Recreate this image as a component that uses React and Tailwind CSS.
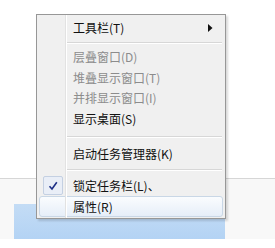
function Sep({ h = "h-[9px]" }) {
  return (
    <div className={`flex ${h} items-center pl-[29px] pr-[3px]`}>
      <div className="w-full border-t border-b border-t-[#d7d7d7] border-b-white" />
    </div>
  );
}

function Item({ label, disabled, arrow, checked, hover, h = "h-[21px]" }) {
  return (
    <div
      className={`relative mx-[2px] flex items-center border ${h} ${
        hover
          ? "rounded-[3px] border-[#c9d7e6] bg-gradient-to-b from-[#fafcfe] to-[#e6eef8]"
          : "border-transparent"
      }`}
    >
      <div className="flex w-[26px] shrink-0 items-center justify-center self-stretch">
        {checked && (
          <div className="flex h-[19px] w-[20px] items-center justify-center rounded-[2px] border border-[#c4d0e2] bg-[#e9eef7]">
            <svg width="10" height="10" viewBox="0 0 10 10">
              <path d="M1.5 5.2 L4 8 L8.8 1.2" fill="none" stroke="#1d2f86" strokeWidth="1.6" />
            </svg>
          </div>
        )}
      </div>
      <span className={`ml-[7px] text-[12px] leading-none ${disabled ? "text-[#8c8c8c]" : "text-[#111]"}`}>
        {label}
      </span>
      {arrow && (
        <svg className="absolute right-[9px]" width="5" height="8" viewBox="0 0 5 8">
          <path d="M0 0 L4.5 4 L0 8 Z" fill="#111" />
        </svg>
      )}
    </div>
  );
}

export default function App() {
  return (
    <div
      className="relative flex h-[248px] w-[275px] flex-col overflow-hidden bg-white"
      style={{ fontFamily: '"Microsoft YaHei", "Noto Sans CJK SC", sans-serif' }}
    >
      {/* desktop backdrop behind the menu */}
      <div className="h-[178px]" />
      <div className="flex h-[61px] flex-col border-t border-[#d6d6d6] bg-[#f8f8f8]">
        <div className="h-[25px]" />
        <div className="flex flex-1 pl-[14px]">
          <div className="w-[211px] bg-gradient-to-b from-[#c4dcf5] to-[#b3d3f4]" />
        </div>
      </div>
      <div className="flex-1 bg-white" />

      {/* context menu */}
      <div className="absolute left-[36px] top-[14px] flex w-[190px] border border-[#979797] bg-[#f0f0f0] shadow-[2px_2px_2px_rgba(0,0,0,0.15)]">
        <div className="flex flex-1 flex-col pb-[1px] pt-[2px]">
          <Item label="工具栏(T)" arrow />
          <Sep />
          <Item label="层叠窗口(D)" disabled h="h-[20px]" />
          <Item label="堆叠显示窗口(T)" disabled h="h-[21px]" />
          <Item label="并排显示窗口(I)" disabled h="h-[20px]" />
          <Item label="显示桌面(S)" h="h-[21px]" />
          <Sep h="h-[15px]" />
          <Item label="启动任务管理器(K)" h="h-[20px]" />
          <Sep h="h-[11px]" />
          <Item label="锁定任务栏(L)、" checked h="h-[21px]" />
          <Item label="属性(R)" hover h="h-[21px]" />
        </div>
        <div className="pointer-events-none absolute bottom-0 left-[28px] top-0 w-[2px] border-l border-r border-l-[#e2e2e2] border-r-white" />
      </div>
    </div>
  );
}
